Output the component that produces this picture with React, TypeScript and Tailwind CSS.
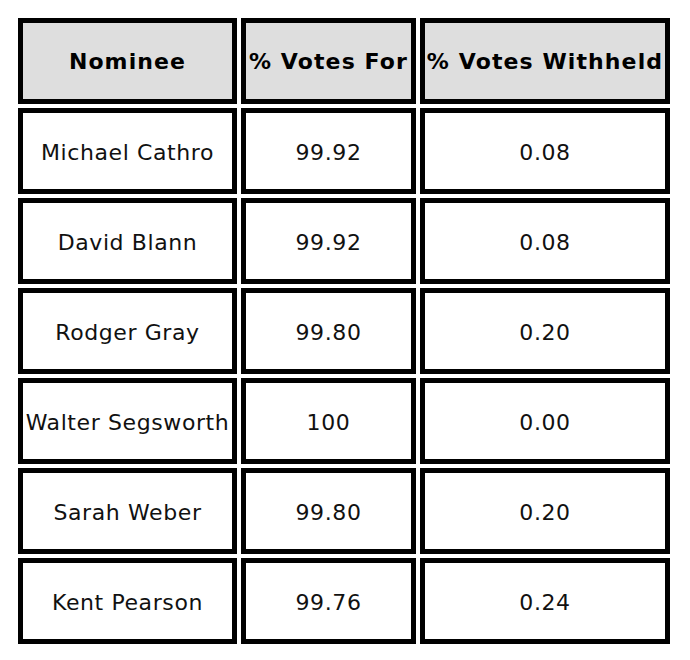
import React from "react";

const rows = [
  ["Michael Cathro", "99.92", "0.08"],
  ["David Blann", "99.92", "0.08"],
  ["Rodger Gray", "99.80", "0.20"],
  ["Walter Segsworth", "100", "0.00"],
  ["Sarah Weber", "99.80", "0.20"],
  ["Kent Pearson", "99.76", "0.24"],
];

export default function App() {
  return (
    <div className="w-[690px] h-[660px] bg-white pt-[18px] pl-[18px] font-['DejaVu_Sans',sans-serif] text-[#111]">
      <div className="grid grid-cols-[219px_175px_250px] auto-rows-[86px] gap-[4px]">
        {["Nominee", "% Votes For", "% Votes Withheld"].map((h) => (
          <div
            key={h}
            className="flex items-center justify-center border-[5px] border-black bg-[#dedede] text-[22px] font-bold tracking-[1.1px] text-black whitespace-nowrap overflow-visible"
          >
            {h}
          </div>
        ))}
        {rows.map((r) =>
          r.map((c, i) => (
            <div
              key={r[0] + i}
              className="flex items-center justify-center border-[5px] border-black bg-white text-[22px] tracking-[0.6px] whitespace-nowrap pt-[2px]"
            >
              {c}
            </div>
          ))
        )}
      </div>
    </div>
  );
}
